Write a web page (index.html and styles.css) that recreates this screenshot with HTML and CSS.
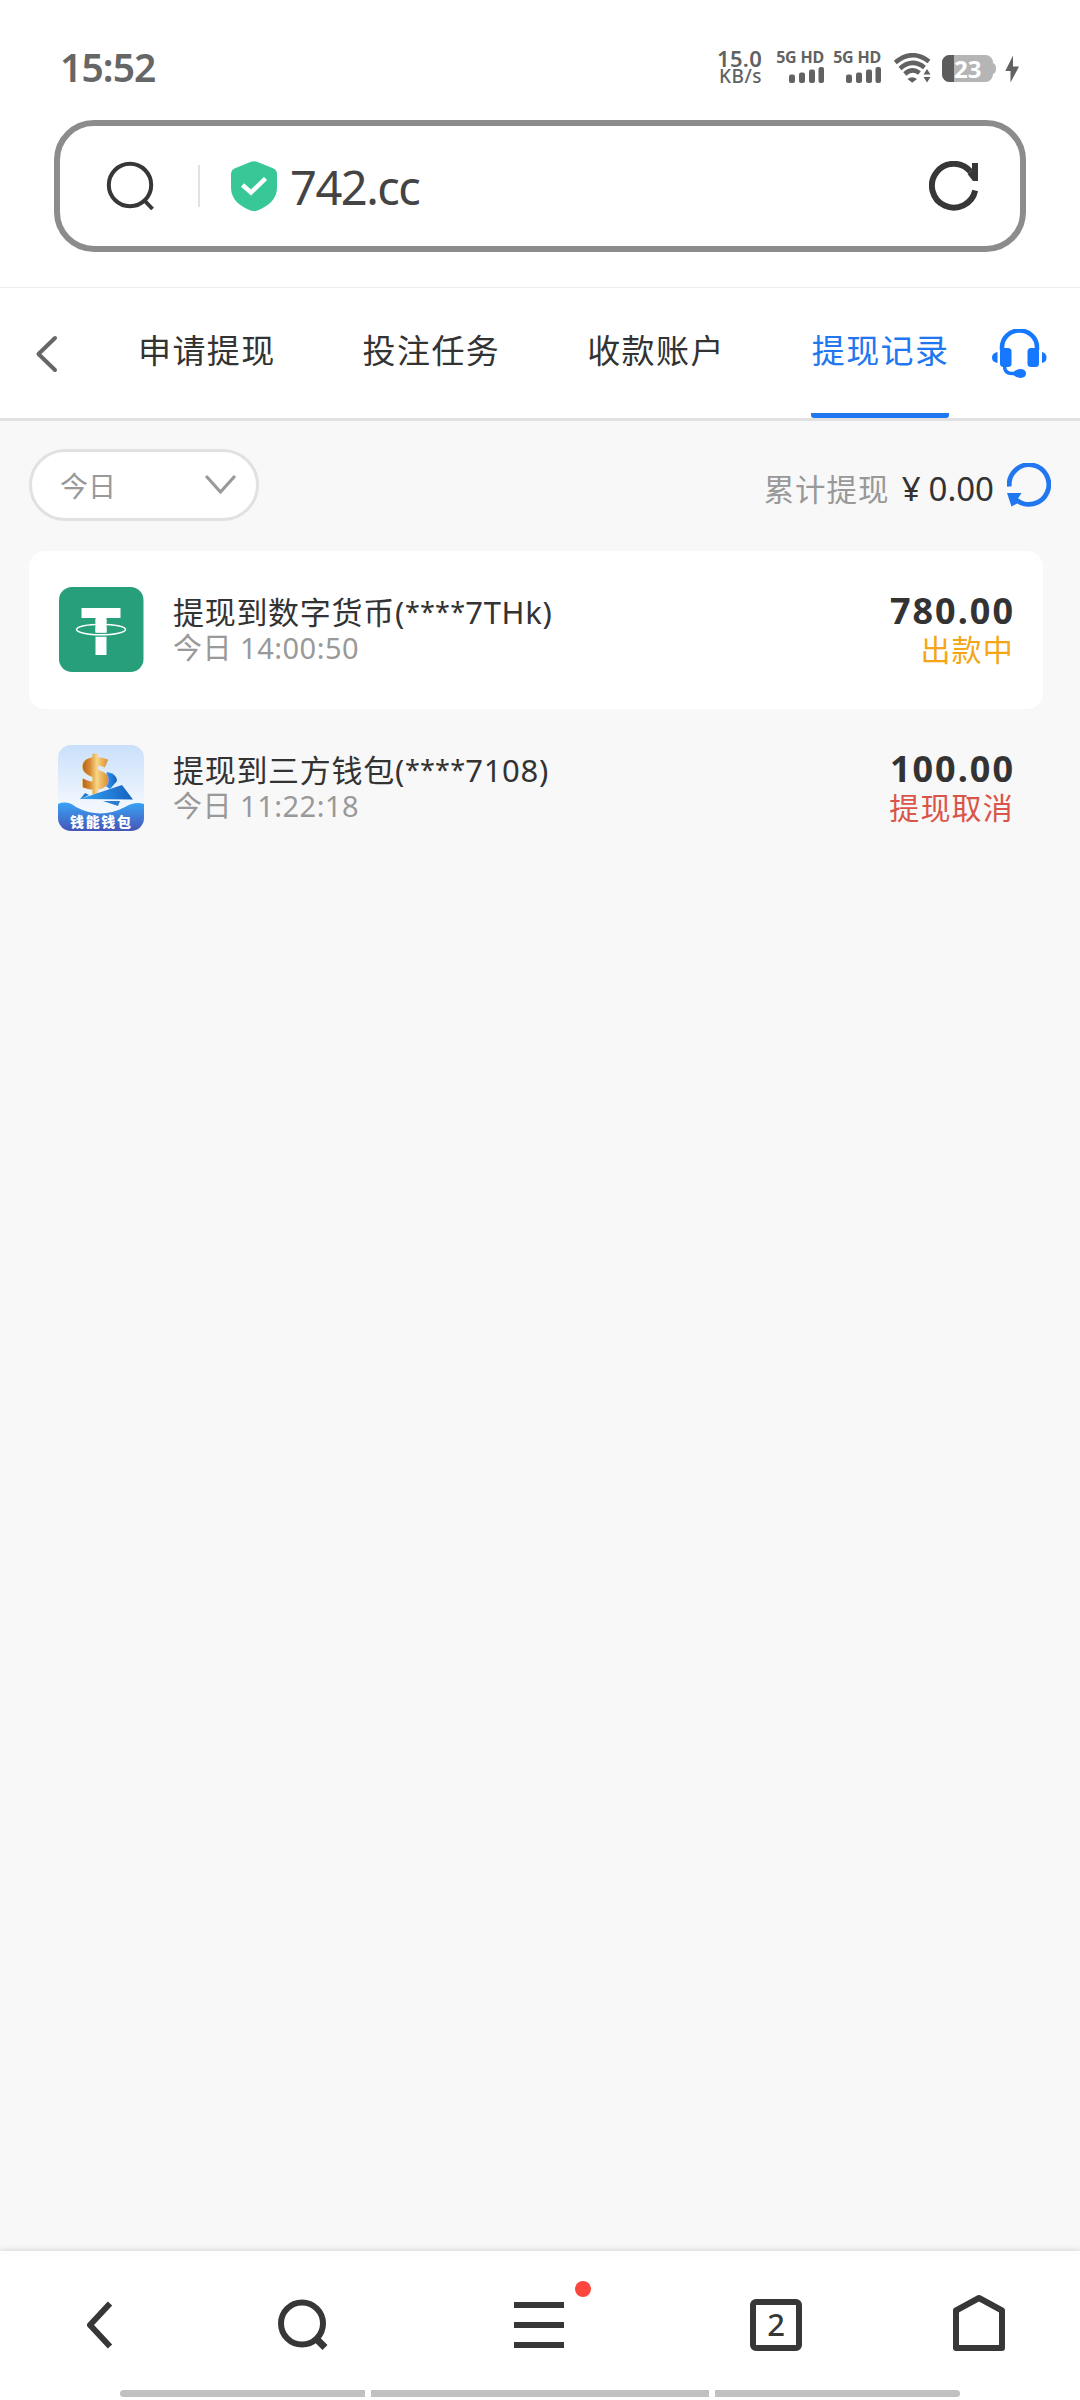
FILE: index.html
```html
<!DOCTYPE html>
<html lang="zh-CN">
<head>
<meta charset="utf-8">
<title>提现记录</title>
<link rel="stylesheet" href="styles.css">
</head>
<body>
<div class="screen">
  <header class="status">
    <span class="clock">15:52</span>
    <div class="rate"><b>15.0</b><span>KB/s</span></div>
    <div class="sim">
      <span>5G HD</span>
      <svg width="35" height="16" viewBox="0 0 35 16"><g fill="#626262"><rect y="7.500" width="6" height="8.500" rx="2"/><rect x="10" y="5.500" width="6" height="10.500" rx="2"/><rect x="20" y="2.500" width="6" height="13.500" rx="2"/><rect x="29.500" width="5.500" height="16" rx="2"/></g></svg>
    </div>
    <div class="sim">
      <span>5G HD</span>
      <svg width="35" height="16" viewBox="0 0 35 16"><g fill="#626262"><rect y="7.500" width="6" height="8.500" rx="2"/><rect x="10" y="5.500" width="6" height="10.500" rx="2"/><rect x="20" y="2.500" width="6" height="13.500" rx="2"/><rect x="29.500" width="5.500" height="16" rx="2"/></g></svg>
    </div>
    <svg class="wifi" width="38" height="30" viewBox="0 0 38 30">
      <g fill="none" stroke="#626262" stroke-width="4.600">
        <path d="M1.300 9.500Q18 -4.500 35 8.500"/>
        <path d="M6 15.500Q18 5 30.500 14.500"/>
        <path d="M10.800 21Q18 14.500 25.500 20"/>
      </g>
      <path d="M13.500 26Q18 22.500 23 26L18.200 29.800Z" fill="#626262"/>
      <path d="M29.500 21.500L33 16l3.500 5.500zM29.500 24h7L33 29.500z" fill="#626262"/>
    </svg>
    <svg class="battery" width="55" height="27" viewBox="0 0 55 27">
      <rect width="51" height="27" rx="7.500" fill="#b5b5b5"/>
      <path d="M51 8q3 1 3 5.500t-3 5.500z" fill="#b5b5b5"/>
      <path d="M7.500 0H12V27H7.500A7.500 7.500 0 0 1 0 19.500V7.500A7.500 7.500 0 0 1 7.500 0Z" fill="#5c5c5c"/>
      <text x="12" y="22.500" class="level">23</text>
    </svg>
    <svg class="bolt" width="15" height="28" viewBox="0 0 15 28"><path d="M8 .5L.3 16H5.500V27.500L14 11.500H8Z" fill="#626262"/></svg>
  </header>

  <div class="address">
    <svg class="find" width="50" height="50" viewBox="0 0 50 50" fill="none" stroke="#373737" stroke-width="4"><circle cx="24" cy="24" r="21.200"/><path d="M38 39L46.500 48"/></svg>
    <i class="split"></i>
    <svg class="shield" width="46" height="50" viewBox="0 0 46 50"><path d="M20 .8Q23 -.5 26 .8L42 7.200Q46 9 46 13V27C46 38 37 45.500 26.500 49.500Q23 50.600 19.500 49.500C9 45.500 0 38 0 27V13Q0 9 4 7.200Z" fill="#38c898"/><path d="M11.500 24L20 31.500L34.500 17.500" fill="none" stroke="#fff" stroke-width="4.500"/></svg>
    <span class="url">742.cc</span>
    <svg class="reload" width="50" height="50" viewBox="0 0 50 50"><path d="M46.200 29.500A21.900 21.900 0 1 1 41.500 10.500" fill="none" stroke="#373737" stroke-width="6"/><path d="M43 2H49V20H44L38.500 13L43 9Z" fill="#373737"/></svg>
  </div>

  <nav class="tabs">
    <svg class="back" width="24" height="38" viewBox="0 0 24 38"><path d="M20 3L3.500 19L20 35" fill="none" stroke="#666" stroke-width="4" stroke-linecap="round" stroke-linejoin="round"/></svg>
    <a class="tab">申请提现</a>
    <a class="tab">投注任务</a>
    <a class="tab">收款账户</a>
    <a class="tab active">提现记录</a>
    <svg class="service" width="55" height="50" viewBox="0 0 55 50">
      <g fill="#1677ff"><rect x="8" y="19" width="11.500" height="19" rx="3.500"/><rect x="35.500" y="19" width="11.500" height="19" rx="3.500"/><path d="M5.500 23V34Q0 33 0 28.500T5.500 23ZM50 23V34Q54.500 33 54.500 28.500T50 23Z"/><path d="M22 42.500Q25 40 29 40Q34 40.500 34 44.500T28.500 49Q25 49 22 46.500Z"/></g>
      <path d="M10 21V18.500A17.500 17 0 0 1 45 18.500V21" fill="none" stroke="#1677ff" stroke-width="4.500"/>
      <path d="M12.500 37Q12.500 44.500 20 44.500H25" fill="none" stroke="#1677ff" stroke-width="3.500"/>
    </svg>
  </nav>

  <main class="content">
    <div class="filter">
      <div class="select">今日
        <svg width="31" height="20" viewBox="0 0 31 20"><path d="M2 2L15.500 17L29 2" fill="none" stroke="#999" stroke-width="3.200" stroke-linecap="round" stroke-linejoin="round"/></svg>
      </div>
      <div class="total"><span class="label">累计提现</span><span class="yen">¥</span><span class="sum">0.00</span></div>
      <svg class="refresh" width="44" height="45" viewBox="0 0 44 45"><path d="M2.300 23.500A19.800 19.800 0 1 1 10 37.300" fill="none" stroke="#2177f0" stroke-width="4.800"/><path d="M0 30H14.500L11 35.500L13.500 38.500L4.500 43.500Z" fill="#2177f0"/></svg>
    </div>

    <section class="row card">
      <svg class="logo" width="86" height="86" viewBox="0 0 86 86"><rect x="1" width="84.500" height="85" rx="13" fill="#279f7a"/><path d="M23.500 21H62.500V31H48.500V68H37.500V31H23.500Z" fill="#fff"/><ellipse cx="43" cy="42.500" rx="24.500" ry="5.300" fill="none" stroke="#279f7a" stroke-width="4"/><ellipse cx="43" cy="42.500" rx="24.500" ry="5.300" fill="none" stroke="#fff" stroke-width="1.500"/><path d="M37.500 33H48.500V45.500H37.500Z" fill="#fff"/></svg>
      <div class="info"><div class="name">提现到数字货币(<span class="mask">****</span>7THk)</div><div class="time">今日 14:00:50</div></div>
      <div class="result"><div class="amount">780.00</div><div class="state pending">出款中</div></div>
    </section>

    <section class="row">
      <svg class="logo" width="86" height="86" viewBox="0 0 86 86">
        <defs>
          <linearGradient id="sky" x2="0" y2="1"><stop stop-color="#c9e0fb"/><stop offset=".7" stop-color="#f2f7fe"/></linearGradient>
          <linearGradient id="sea" x2="0" y2="1"><stop stop-color="#38a2f5"/><stop offset="1" stop-color="#4756b8"/></linearGradient>
          <linearGradient id="gold"><stop stop-color="#b35e18"/><stop offset=".3" stop-color="#d98c35"/><stop offset=".55" stop-color="#f8d685"/><stop offset="1" stop-color="#d78926"/></linearGradient>
          <linearGradient id="plane"><stop stop-color="#36a5f2"/><stop offset="1" stop-color="#1460c0"/></linearGradient>
          <clipPath id="tile"><rect width="86" height="86" rx="13"/></clipPath>
        </defs>
        <rect width="86" height="86" rx="13" fill="url(#sky)"/>
        <path d="M49 27Q59 29 59 36L52 44L46 40Z" fill="url(#plane)"/>
        <text x="37.500" y="45.500" class="coin" text-anchor="middle" fill="url(#gold)" stroke="url(#gold)" stroke-width="2.500">$</text>
        <path d="M22 54L64 40L75 54.500Z" fill="url(#plane)"/><path d="M22 54.500L27 48L31 50Z" fill="#2979ce"/>
        <path d="M45 56H62L60 61Z" fill="#2d7dd5"/>
        <path d="M0 59Q9 55 18 62Q42 75 67 62Q77 56 86 59V86H0Z" fill="url(#sea)" clip-path="url(#tile)"/>
        <text x="12" y="82" class="brand" textLength="61">钱能钱包</text>
      </svg>
      <div class="info"><div class="name">提现到三方钱包(<span class="mask">****</span>7108)</div><div class="time">今日 11:22:18</div></div>
      <div class="result"><div class="amount">100.00</div><div class="state cancelled">提现取消</div></div>
    </section>
  </main>

  <footer class="toolbar">
    <div class="tools">
      <svg class="t-back" width="28" height="50" viewBox="0 0 28 50"><path d="M25 3.500L5 25L25 46.500" fill="none" stroke="#373737" stroke-width="6" stroke-linejoin="round"/></svg>
      <svg class="t-find" width="52" height="52" viewBox="0 0 52 52" fill="none" stroke="#373737"><circle cx="24" cy="24.500" r="21" stroke-width="6"/><path d="M38 39.500L47 48.500" stroke-width="7"/></svg>
      <div class="t-menu"><svg width="50" height="46" viewBox="0 0 50 46" fill="#373737"><path d="M0 0H50V6H0ZM0 20H50V26H0ZM0 40H50V46H0Z"/></svg><i class="dot"></i></div>
      <div class="t-pages">2</div>
      <svg class="t-home" width="52" height="56" viewBox="0 0 52 56"><path d="M3 15.500L26 3L49 15.500V53H3Z" fill="none" stroke="#373737" stroke-width="6" stroke-linejoin="round"/></svg>
    </div>
    <div class="gesture"><i></i><i></i><i></i></div>
  </footer>
</div>
</body>
</html>
```
FILE: styles.css
```css
* { box-sizing: border-box; }
body { margin: 0; font-family: "Noto Sans", "Noto Sans CJK SC", sans-serif; color: #333; }
svg { display: block; flex: none; }
.screen { width: 1080px; height: 2400px; display: flex; flex-direction: column; background: #fff; overflow: hidden; white-space: nowrap; }

/* system status */
.status { height: 120px; display: flex; align-items: flex-start; padding: 49px 0 0 60px; color: #626262; }
.clock { width: 657px; font-size: 39px; font-weight: 600; line-height: 35px; letter-spacing: -.9px; color: #666; }
.rate { width: 60px; display: flex; flex-direction: column; }
.rate b { font-size: 22px; font-weight: 600; line-height: 18px; letter-spacing: .3px; }
.rate span { font-size: 19px; font-weight: 500; line-height: 19px; margin-left: 2px; letter-spacing: .5px; }
.sim { width: 57px; padding: 1px 10px 0 0; display: flex; flex-direction: column; align-items: flex-end; gap: 3px; }
.sim span { font-size: 16px; font-weight: 700; line-height: 14px; letter-spacing: -.2px; }
.wifi { margin: 4px 0 0 3px; }
.battery { margin: 6px 0 0 10px; }
.level { font-size: 24px; font-weight: 700; fill: #fff; }
.bolt { margin: 6px 0 0 8px; }

/* browser address bar */
.address { flex: none; width: 972px; height: 132px; margin: 0 54px 35px; padding-left: 46px; border: 6px solid #8c8c8c; border-radius: 40px; display: flex; align-items: center; }
.find { margin-top: -1px; }
.split { width: 2px; height: 42px; margin-left: 42px; background: #e2e2e2; }
.shield { margin-left: 31px; }
.url { flex: 1; margin-left: 13px; padding-top: 2px; font-size: 47px; line-height: 60px; letter-spacing: -1.500px; color: #444; }
.reload { margin-right: 41px; }

/* section tabs */
.tabs { flex: none; height: 134px; padding: 0 34px; display: flex; border-top: 1px solid #eee; border-bottom: 3px solid #e1e1e1; }
.back { margin: 47px 78px 0 1px; }
.tab { width: 138px; margin-right: 86.600px; padding-left: 1px; font-size: 33px; line-height: 126px; letter-spacing: 1.400px; }
.active { margin-right: 43px; color: #2177f0; border-bottom: 5px solid #2177f0; border-radius: 3px; }
.service { margin-top: 41px; }

.content { flex: 1; padding: 28px 29px 0; background: #f8f8f8; }
.filter { height: 72px; margin-bottom: 30px; display: flex; align-items: center; }
.select { width: 230px; height: 72px; padding: 0 20px 0 28px; display: flex; align-items: center; justify-content: space-between; border: 3px solid #e1e1e1; border-radius: 36px; background: #fff; color: #999; font-size: 28px; }
.total { flex: 1; padding-top: 7px; display: flex; align-items: baseline; justify-content: flex-end; font-size: 33px; line-height: 44px; }
.label { margin-right: 12px; font-size: 30.500px; letter-spacing: 1px; color: #999; }
.yen { margin-right: 8px; }
.refresh { margin-left: 13px; }

.row { width: 1014px; height: 158px; padding: 0 29px; display: flex; align-items: center; border-radius: 16px; }
.card { background: #fff; }
.info { flex: 1; margin-left: 29px; line-height: 35px; }
.name { font-size: 31px; letter-spacing: .700px; }
.mask { font-size: 27px; letter-spacing: .200px; vertical-align: 2px; line-height: 1; }
.time { font-size: 29px; letter-spacing: .500px; color: #999; }
.result { line-height: 39px; text-align: right; }
.amount { font-size: 36px; font-weight: 700; letter-spacing: 2px; margin-right: -1px; }
.state { font-size: 30px; letter-spacing: 1.200px; }
.pending { color: #f5a614; }
.cancelled { color: #d9554a; }
.coin { font-size: 47px; font-weight: 700; }
.brand { font-family: "Noto Sans CJK SC", sans-serif; font-size: 14px; font-weight: 900; fill: #fff; }

/* browser toolbar */
.toolbar { flex: none; height: 149px; display: flex; flex-direction: column; justify-content: space-between; background: #fff; box-shadow: 0 -1px 6px rgba(0,0,0,.14); z-index: 1; }
.tools { display: flex; height: 139px; padding-left: 85px; align-items: flex-start; }
.t-back { margin-top: 49px; }
.t-find { margin: 48px 0 0 165px; }
.t-menu { position: relative; margin: 51px 0 0 184px; }
.dot { position: absolute; left: 61px; top: -21px; width: 16px; height: 16px; border-radius: 50%; background: #fc453c; }
.t-pages { width: 52px; height: 52px; margin: 48px 0 0 186px; border: 6px solid #373737; border-radius: 6px; font-size: 31px; font-weight: 500; line-height: 39px; text-align: center; color: #373737; }
.t-home { margin: 44px 0 0 151px; }
.gesture { display: flex; gap: 6px; padding: 0 120px 3px; }
.gesture i { width: 245px; height: 7px; background: #c1c1c1; }
.gesture i:nth-child(2) { width: 338px; }
.gesture i:first-child { border-radius: 4px 0 0 4px; }
.gesture i:last-child { border-radius: 0 4px 4px 0; }
```
